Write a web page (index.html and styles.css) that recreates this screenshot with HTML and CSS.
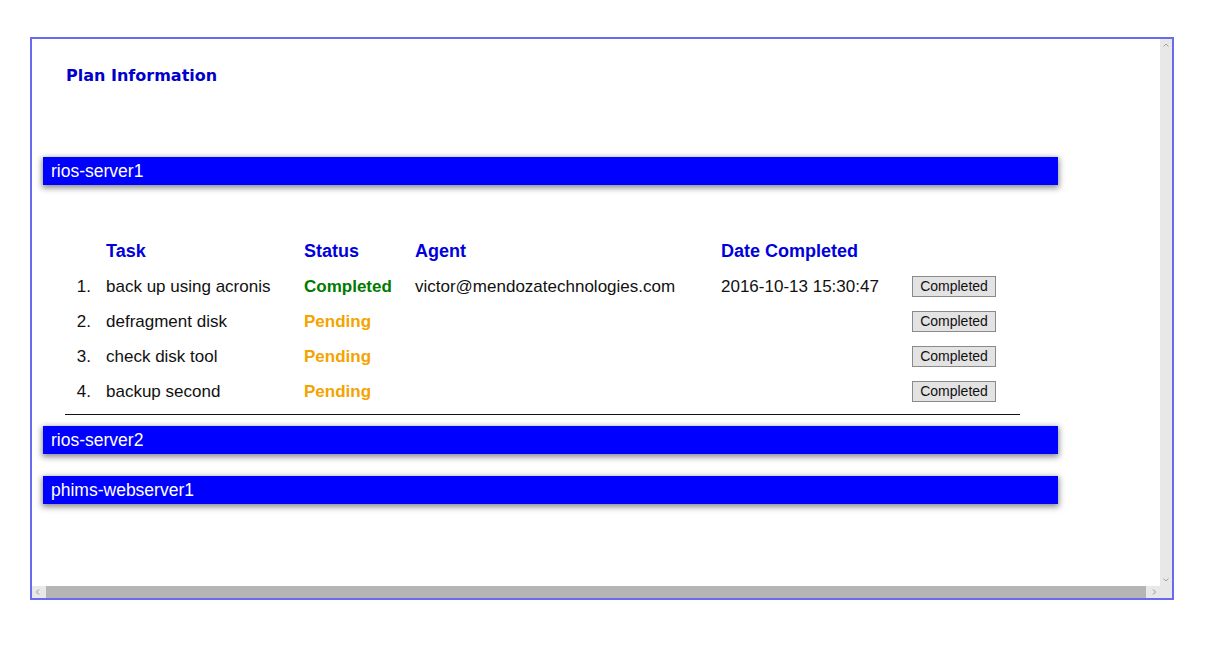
FILE: index.html
```html
<!DOCTYPE html>
<html>
<head>
<meta charset="utf-8">
<link rel="stylesheet" href="styles.css">
</head>
<body>
<div class="frame">
  <div class="content">
    <h1 class="title">Plan Information</h1>
    <div class="server">rios-server1</div>
    <div class="tasks">
      <div class="row head">
        <span class="num"></span>
        <span class="task">Task</span>
        <span class="status">Status</span>
        <span class="agent">Agent</span>
        <span class="date">Date Completed</span>
        <span class="action"></span>
      </div>
      <div class="row">
        <span class="num">1.</span>
        <span class="task">back up using acronis</span>
        <span class="status done">Completed</span>
        <span class="agent">victor@mendozatechnologies.com</span>
        <span class="date">2016-10-13 15:30:47</span>
        <span class="action"><button class="btn">Completed</button></span>
      </div>
      <div class="row">
        <span class="num">2.</span>
        <span class="task">defragment disk</span>
        <span class="status pending">Pending</span>
        <span class="agent"></span>
        <span class="date"></span>
        <span class="action"><button class="btn">Completed</button></span>
      </div>
      <div class="row">
        <span class="num">3.</span>
        <span class="task">check disk tool</span>
        <span class="status pending">Pending</span>
        <span class="agent"></span>
        <span class="date"></span>
        <span class="action"><button class="btn">Completed</button></span>
      </div>
      <div class="row">
        <span class="num">4.</span>
        <span class="task">backup second</span>
        <span class="status pending">Pending</span>
        <span class="agent"></span>
        <span class="date"></span>
        <span class="action"><button class="btn">Completed</button></span>
      </div>
    </div>
    <div class="rule"></div>
    <div class="server">rios-server2</div>
    <div class="server second">phims-webserver1</div>
  </div>
  <div class="vscroll">
    <svg width="12" height="12" viewBox="0 0 12 12"><path d="M3.5 7.5 L6 5 L8.5 7.5" fill="none" stroke="#a0a0a0" stroke-width="1"/></svg>
    <svg width="12" height="12" viewBox="0 0 12 12"><path d="M3.5 4.5 L6 7 L8.5 4.5" fill="none" stroke="#a0a0a0" stroke-width="1"/></svg>
  </div>
  <div class="hscroll">
    <svg class="arrow" width="12" height="12" viewBox="0 0 12 12"><path d="M7 3.5 L4.5 6 L7 8.5" fill="none" stroke="#909090" stroke-width="1"/></svg>
    <div class="thumb"></div>
    <svg class="arrow" width="12" height="12" viewBox="0 0 12 12"><path d="M5 3.5 L7.5 6 L5 8.5" fill="none" stroke="#909090" stroke-width="1"/></svg>
  </div>
  <div class="corner"></div>
</div>
</body>
</html>
```
FILE: styles.css
```css
html, body {
  margin: 0;
  background: #ffffff;
}
body {
  padding: 37px 0 0 30px;
  font-family: "Liberation Sans", Arial, sans-serif;
}
.frame {
  width: 1140px;
  height: 559px;
  border: 2px solid #6a6af0;
  display: grid;
  grid-template-columns: 1fr 12px;
  grid-template-rows: 1fr 12px;
}
.content {
  overflow: hidden;
  padding: 0 0 0 11px;
}
.title {
  font-family: "DejaVu Sans", Verdana, sans-serif;
  font-size: 16px;
  font-weight: bold;
  color: #0000cc;
  margin: 27px 0 0 23px;
  line-height: 20px;
  height: 20px;
}
.server {
  width: 1007px;
  height: 28px;
  line-height: 28px;
  background: #0000ff;
  color: #ffffff;
  font-size: 17.5px;
  padding-left: 8px;
  box-shadow: 0 2px 6px 1px rgba(0,0,0,0.45);
  margin-top: 71px;
}
.tasks {
  margin-top: 49px;
}
.row {
  display: flex;
  height: 35px;
  line-height: 35px;
  font-size: 17px;
  color: #111111;
  align-items: center;
}
.row.head {
  font-weight: bold;
  color: #0000dd;
  font-size: 18px;
}
.num {
  width: 63px;
  text-align: right;
  padding-right: 15px;
  box-sizing: border-box;
  flex: none;
}
.task { width: 198px; flex: none; }
.status { width: 111px; flex: none; font-weight: bold; }
.agent { width: 306px; flex: none; }
.date { width: 191px; flex: none; }
.action { flex: none; display: flex; align-items: center; }
.done { color: #007a00; }
.pending { color: #f5a300; }
.btn {
  font-family: "Liberation Sans", Arial, sans-serif;
  font-size: 14px;
  color: #111111;
  background: #e3e3e3;
  border: 1px solid #8a8a8a;
  height: 21px;
  width: 84px;
  padding: 0;
  line-height: 19px;
}
.rule {
  width: 955px;
  height: 1px;
  background: #111111;
  margin: 5px 0 0 22px;
}
.rule + .server {
  margin-top: 11px;
}
.server.second {
  margin-top: 22px;
}
.vscroll {
  background: #e8e8e8;
  display: flex;
  flex-direction: column;
  justify-content: space-between;
}
.hscroll {
  background: #e8e8e8;
  display: flex;
  align-items: center;
}
.hscroll .arrow { flex: none; }
.thumb {
  flex: 1;
  height: 12px;
  background: #b5b5b5;
  margin: 0 2px;
}
.corner {
  background: #e8e8e8;
}
```
